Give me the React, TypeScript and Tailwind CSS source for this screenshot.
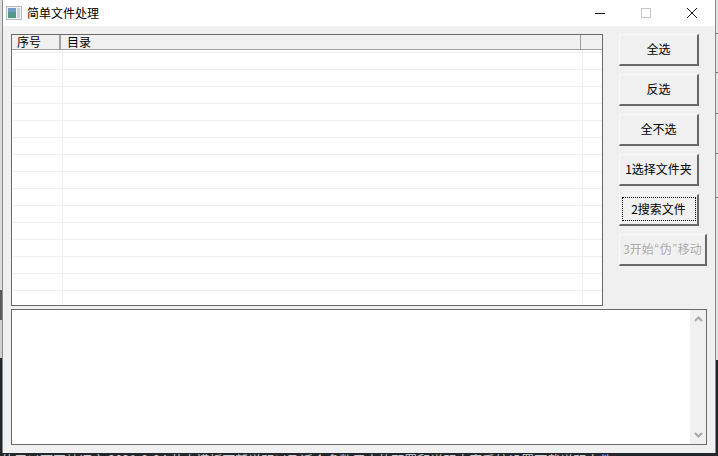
const rows = Array.from({ length: 15 });

function Btn({ children, focus, disabled, wide }: { children: React.ReactNode; focus?: boolean; disabled?: boolean; wide?: boolean }) {
  return (
    <div
      className={`flex h-[32px] shrink-0 items-center justify-center whitespace-nowrap border-t border-l border-t-[#f8f8f8] border-l-[#f8f8f8] border-r-2 border-b-2 border-r-[#696969] border-b-[#696969] bg-[#f0f0f0] pb-px text-[12px] leading-none ${wide ? "w-[88px]" : "w-[80px]"} ${disabled ? "text-[#a8a8a8] [text-shadow:1px_1px_0_#fafafa]" : "text-black"}`}
    >
      {focus ? (
        <span className="flex h-[24px] w-[74px] items-center justify-center border border-dotted border-black">{children}</span>
      ) : (
        children
      )}
    </div>
  );
}

function Q({ c }: { c: string }) {
  return <span className="mx-px font-['Liberation_Sans']">{c}</span>;
}

export default function App() {
  return (
    <div
      className="flex h-[456px] w-[718px] flex-col overflow-hidden bg-[#23272b]"
      style={{ fontFamily: '"Noto Sans CJK SC","Liberation Sans",sans-serif' }}
    >
      <div className="flex min-h-0 flex-1">
        <div className="flex w-[2px] shrink-0 flex-col">
          <div className="h-[290px] bg-[#dcdcdc]" />
          <div className="h-[30px] bg-[#5a5a5a]" />
          <div className="h-[38px] bg-[#d0d0d0]" />
        </div>
        <div className="flex min-w-0 flex-1 flex-col border-x border-[#8a8a8a] bg-[#f0f0f0]">
          <div className="flex h-[26px] shrink-0 items-center bg-white">
            <svg width="16" height="16" viewBox="0 0 16 16" className="ml-[3px]">
              <rect x="0.5" y="1.5" width="15" height="13" fill="#f0f2f3" stroke="#b4babd" />
              <rect x="2" y="3" width="8" height="10" fill="#4f9a86" />
              <rect x="2" y="3" width="8" height="4" fill="#6f9dc6" />
              <rect x="11" y="3" width="3" height="10" fill="#ccd3d8" />
            </svg>
            <span className="ml-[5px] text-[12px] text-black">简单文件处理</span>
            <div className="flex-1" />
            <svg width="12" height="12" viewBox="0 0 12 12" className="mr-[34px]">
              <path d="M1 6.5h10" stroke="#111" />
            </svg>
            <svg width="12" height="12" viewBox="0 0 12 12" className="mr-[34px]">
              <rect x="1.5" y="1.5" width="9" height="9" fill="none" stroke="#c8c8c8" />
            </svg>
            <svg width="12" height="12" viewBox="0 0 12 12" className="mr-[17px]">
              <path d="M1 1l10 10M11 1L1 11" stroke="#111" />
            </svg>
          </div>
          <div className="flex min-h-0 flex-1 flex-col pt-[8px] pr-[8px] pb-[8px] pl-[8px]">
            <div className="flex h-[272px] shrink-0 gap-[16px]">
              <div className="flex w-[592px] shrink-0 flex-col overflow-hidden border border-[#696969] bg-white">
                <div className="flex h-[15px] shrink-0 items-center border-b border-[#a0a0a0] bg-[#f0f0f0] text-[12px] leading-none text-black">
                  <div className="flex h-full w-[49px] items-center border-r-2 border-[#a0a0a0] pl-[5px]">序号</div>
                  <div className="flex h-full w-[520px] items-center border-r border-[#a0a0a0] pl-[6px]">目录</div>
                </div>
                <div className="relative flex-1 overflow-hidden pt-[2px]">
                  {rows.map((_, i) => (
                    <div key={i} className="h-[17px] border-t border-[#f0f0f0]" />
                  ))}
                  <div className="absolute top-0 bottom-0 left-[50px] w-px bg-[#f0f0f0]" />
                  <div className="absolute top-0 bottom-0 left-[570px] w-px bg-[#f0f0f0]" />
                </div>
              </div>
              <div className="flex flex-col gap-[8px]">
                <Btn>全选</Btn>
                <Btn>反选</Btn>
                <Btn>全不选</Btn>
                <Btn>1选择文件夹</Btn>
                <Btn focus>2搜索文件</Btn>
                <Btn disabled wide>3开始<Q c="“" />伪<Q c="”" />移动</Btn>
              </div>
            </div>
            <div className="mt-[3px] flex min-h-0 flex-1 justify-end border border-[#696969] bg-white">
              <div className="flex w-[16px] flex-col items-center justify-between bg-[#f0f0f0] py-[6px]">
                <svg width="9" height="6" viewBox="0 0 9 6"><path d="M1 5l3.5-3.5L8 5" fill="none" stroke="#a8a8a8" strokeWidth="2" /></svg>
                <svg width="9" height="6" viewBox="0 0 9 6"><path d="M1 1l3.5 3.5L8 1" fill="none" stroke="#a8a8a8" strokeWidth="2" /></svg>
              </div>
            </div>
          </div>
        </div>
        <div className="flex w-[2px] shrink-0 flex-col bg-[#e4e4e4]">
          <div className="h-[34px] border-b border-[#777]" />
          <div className="h-[39px] border-b border-[#777]" />
          <div className="h-[41px] border-b border-[#777]" />
          <div className="h-[40px] border-b border-[#777]" />
          <div className="h-[44px] border-b border-[#777]" />
          <div className="h-[162px]" />
          <div className="flex-1 bg-[#23272b]" />
        </div>
      </div>
      <div className="h-[3px] shrink-0 overflow-hidden whitespace-nowrap bg-[#23272b] pl-[1px] text-[13px] leading-[15px] text-[#c8ccd0]">
        <div className="-mt-[1px]">使用以下回帖语言  2021-9-24 节点模板更新说明以及适合多数用户的配置和说明内容系统设置下载说明文件</div>
      </div>
    </div>
  );
}
